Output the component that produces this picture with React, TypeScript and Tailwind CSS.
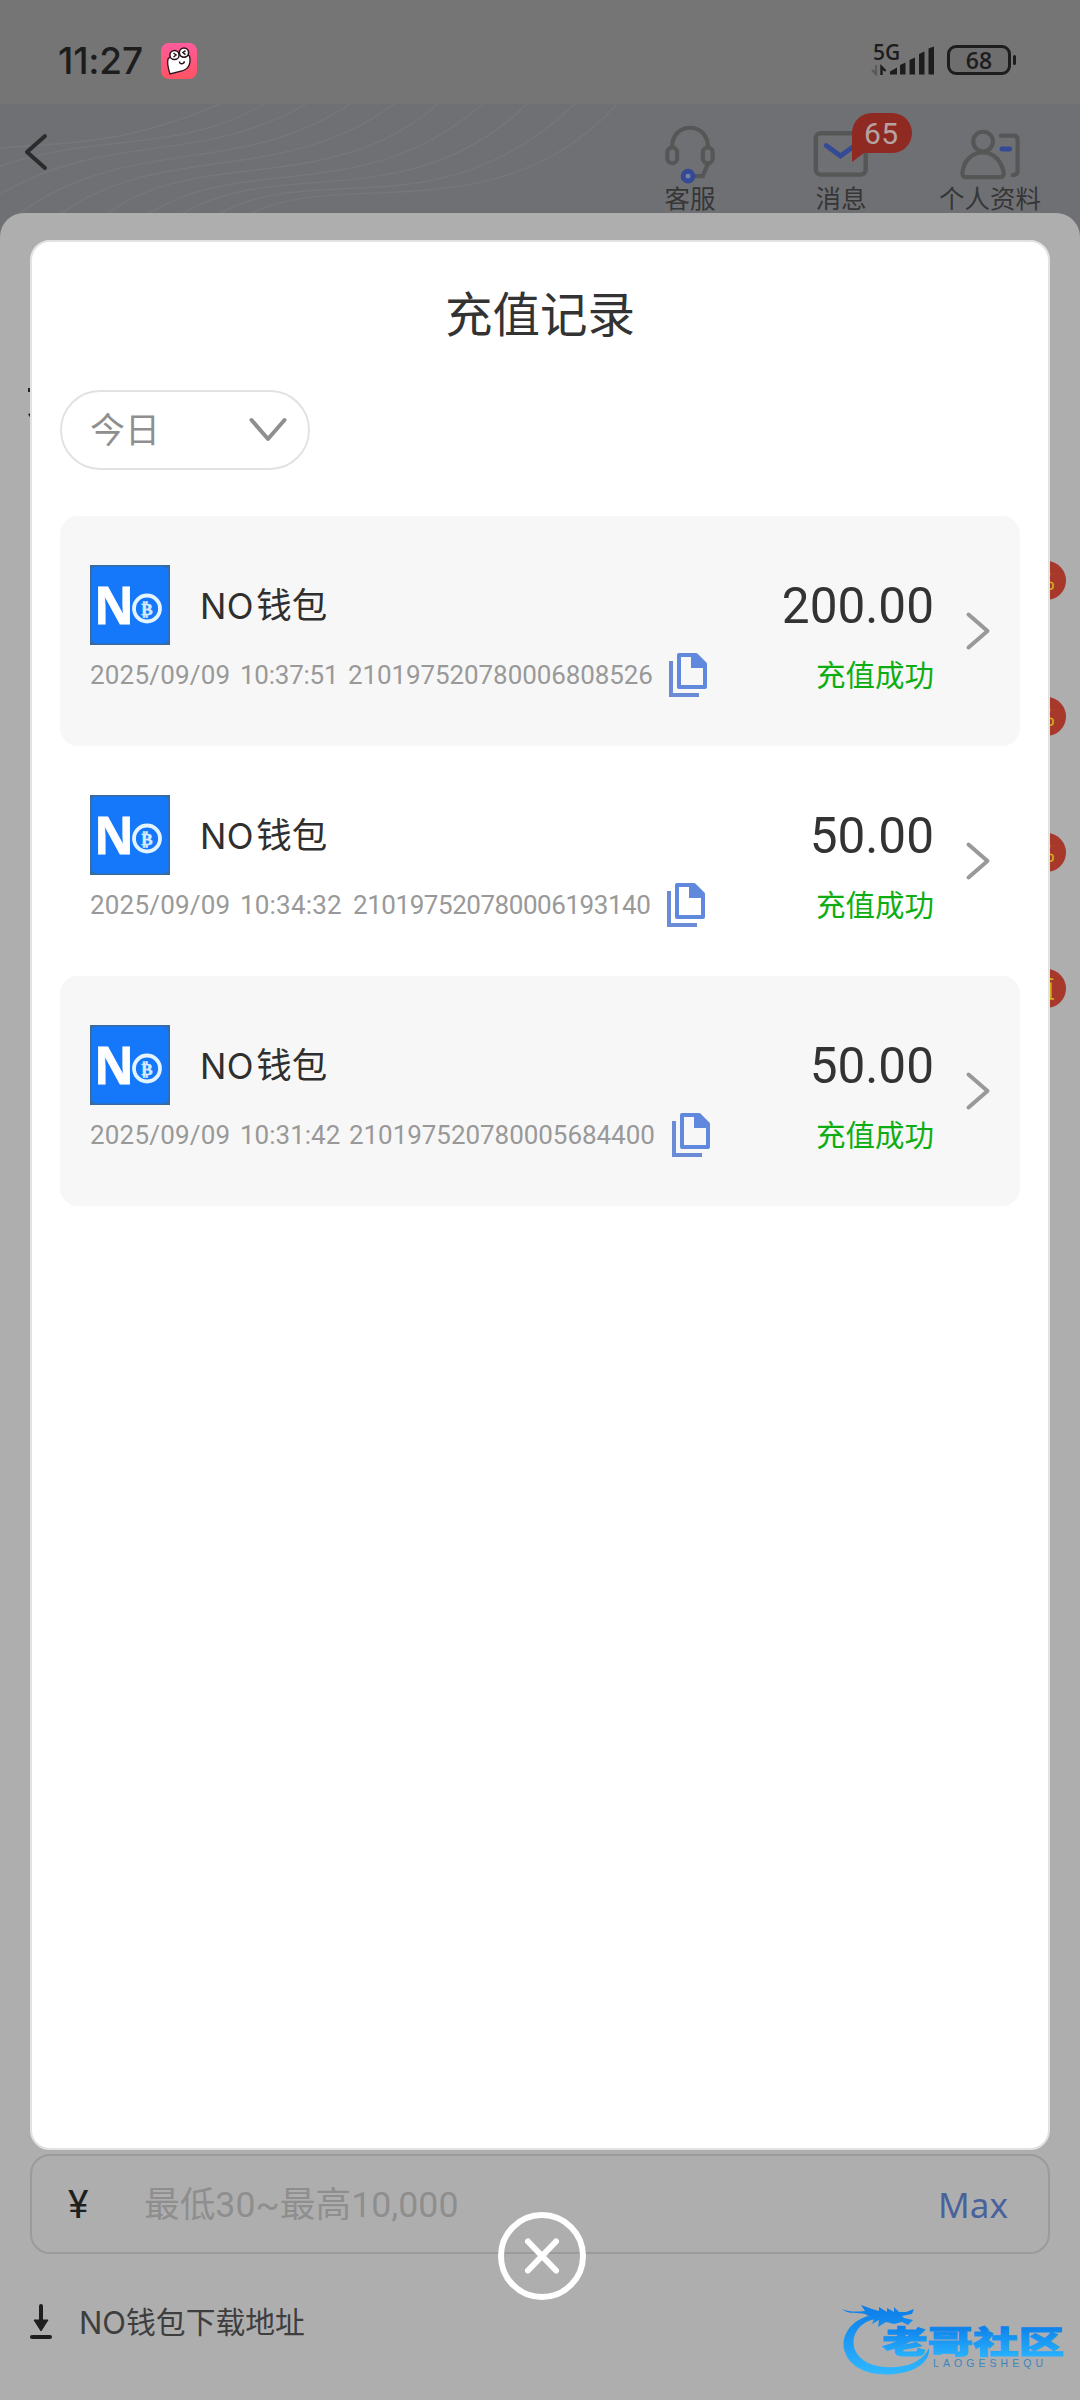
import React from "react";

const cjk = "font-[Roboto,'Noto_Sans_CJK_SC',sans-serif]";

type RecordItem = { amount: string; time: string; id: string; idClass: string; timeClass: string };

const records: RecordItem[] = [
  { amount: "200.00", time: "10:37:51", id: "210197520780006808526", timeClass: "w-[107px] tracking-[-0.25px]", idClass: "w-[321px] tracking-[-0.1px]" },
  { amount: "50.00", time: "10:34:32", id: "210197520780006193140", timeClass: "w-[112px] tracking-[0.2px]", idClass: "w-[314px] tracking-[-0.45px]" },
  { amount: "50.00", time: "10:31:42", id: "210197520780005684400", timeClass: "w-[108px]", idClass: "w-[323px] tracking-[-0.05px]" },
];

function StatusBar() {
  return (
    <div className="flex h-[104px] items-start justify-between bg-[#757575] pl-[58px] pr-[64px]">
      <div className="flex items-center pt-[42px]">
        <span className="w-[103px] whitespace-nowrap font-[Inter] text-[37px] font-medium leading-[38px] tracking-[-0.2px] text-[#1d1d1d]">11:27</span>
        <svg width="36" height="36" viewBox="0 0 36 36">
          <defs>
            <linearGradient id="app" x1="0" y1="0" x2="0" y2="1">
              <stop offset="0" stopColor="#ff5c9c" />
              <stop offset="1" stopColor="#ff5363" />
            </linearGradient>
          </defs>
          <rect width="36" height="36" rx="8" fill="url(#app)" />
          <path d="M7 16C10 12 24 9 28.500 13C30.500 22 27 26 21 28L9 31C7 25 6 20 7 16Z" fill="#fff" stroke="#26101a" strokeWidth="1.3" />
          <circle cx="13.5" cy="12" r="4.6" fill="#fff" stroke="#26101a" strokeWidth="1.5" />
          <circle cx="23" cy="9.6" r="4.6" fill="#fff" stroke="#26101a" strokeWidth="1.5" />
          <path d="M12.5 10l2.6 2l-2.6 2M24.5 7.6l-2.6 2l2.6 2M18.500 18.500q0 2.500 2.500 2.300q2.300-.3 2.300-2.500" fill="none" stroke="#26101a" strokeWidth="1.4" />
        </svg>
      </div>
      <div className="flex items-start pt-[42px]">
        <div className="relative w-[76px]">
          <span className="absolute left-[2px] top-0 font-['Open_Sans'] text-[21px] font-semibold leading-[20px] text-[#1d1d1d]">5G</span>
          <svg width="76" height="34" viewBox="0 0 76 34">
            <path d="M5 23v9l-4-4" fill="none" stroke="#5a5a5a" strokeWidth="2.200" />
            <path d="M10.500 33V25l4 4" fill="none" stroke="#1d1d1d" strokeWidth="2.400" />
            <path d="M19 32.500V29.500l7-4v7zM29 32.500V23l5.500-2.500v12zM38.500 32.500V18l5.500-2.500v17zM48 32.500V12l5.500-2.500v23zM57.500 32.500V6.500l5.500-2v28z" fill="#1d1d1d" />
          </svg>
        </div>
        <div className="mt-[3px] flex h-[30px] w-[64px] items-center justify-center rounded-[9px] border-[3px] border-[#1d1d1d] bg-[#6e6e6e] font-['Open_Sans'] text-[23px] font-semibold leading-none text-[#1d1d1d]">68</div>
        <div className="ml-[2px] mt-[13px] h-[10px] w-[3px] rounded-full bg-[#1d1d1d]" />
      </div>
    </div>
  );
}

function Header() {
  const label = "whitespace-nowrap text-[25.500px] leading-[27px] text-[#363636]";
  return (
    <div className="relative h-[133px] bg-[#6f7074]">
      <svg className="absolute left-0 top-0" width="640" height="109" viewBox="0 0 640 109" fill="none" stroke="#76777a" strokeWidth="1.4">
        <path d="M0 44C70 38 120 42 220 0" />
        <path d="M0 62C100 28 180 50 264 0" />
        <path d="M0 90C110 26 200 62 306 0" />
        <path d="M20 109C130 30 240 74 350 0" />
        <path d="M62 109C160 38 285 82 394 0" />
        <path d="M108 109C200 42 330 94 438 0" />
        <path d="M150 109C240 50 370 102 482 0" />
        <path d="M183 109C280 52 410 114 527 0" />
        <path d="M220 109C320 56 440 128 575 0" />
        <path d="M252 109C340 64 500 130 617 0" />
      </svg>
      <div className="relative flex h-[109px] justify-between pl-[24px] pr-[39px]">
        <svg className="mt-[29px]" width="24" height="38" viewBox="0 0 24 38" fill="none">
          <path d="M21 3L3 19L21 35" stroke="#2b2b2b" strokeWidth="4" strokeLinecap="round" strokeLinejoin="round" />
        </svg>
        <div className="flex pt-[8px]">
          <div className="flex w-[50px] flex-col items-center">
            <svg width="50" height="75" viewBox="0 0 50 75" fill="none" stroke="#555656" strokeWidth="4.200">
              <path d="M7 37C5 9 45 9 43 37" />
              <rect x="2" y="36" width="10" height="16" rx="5" />
              <rect x="38" y="36" width="10" height="16" rx="5" />
              <path d="M43 53L38 65H28" />
              <circle cx="23" cy="65" r="5" stroke="#354a94" strokeWidth="5" fill="#7784a5" />
            </svg>
            <span className={label}>客服</span>
          </div>
          <div className="relative ml-[98px] flex w-[56px] flex-col items-center">
            <svg width="56" height="75" viewBox="0 0 56 75" fill="none">
              <rect x="2.500" y="21.500" width="50.500" height="42" rx="5" stroke="#555656" strokeWidth="4.500" />
              <path d="M13 34L27.500 44.500L42 34" stroke="#354a94" strokeWidth="5" strokeLinecap="round" />
            </svg>
            <span className={label}>消息</span>
            <div className="absolute left-[39px] top-[1px] h-[49px] w-[60px]">
              <svg width="60" height="49" viewBox="0 0 60 49">
                <path d="M20 0H40A20 20 0 0 1 40 40H12L0 49V20A20 20 0 0 1 20 0Z" fill="#8f2a22" />
              </svg>
              <span className="absolute left-[12px] top-[5px] font-[Roboto] text-[30px] leading-[32px] tracking-[0.5px] text-[#b6a3a1]">65</span>
            </div>
          </div>
          <div className="ml-[70px] flex w-[102px] flex-col items-center">
            <svg width="60" height="75" viewBox="0 0 60 75" fill="none" stroke="#555656" strokeWidth="4.200">
              <circle cx="23" cy="30" r="10" />
              <path d="M23 41C10 41 3 51 2 62Q2 66 6 66H40Q44 66 44 62C42 51 35 41 23 41Z" />
              <path d="M41 24H54Q58 24 58 28V59Q58 64 53 64" strokeLinecap="round" />
              <path d="M42 37.500H50" stroke="#354a94" strokeWidth="5" strokeLinecap="round" />
            </svg>
            <span className={label}>个人资料</span>
          </div>
        </div>
      </div>
    </div>
  );
}

function PromoBadge({ text, className }: { text: string; className: string }) {
  return (
    <div className={`absolute right-[14px] flex h-[39px] w-[39px] items-center justify-end overflow-hidden rounded-full bg-[#a7382c] pr-[11px] text-[26px] leading-none text-[#d1ab1e] ${className}`}>
      {text}
    </div>
  );
}

function Sheet() {
  return (
    <div className="relative -mt-[24px] h-[2187px] rounded-t-[24px] bg-[#aeaeae] px-[30px] pt-[1941px]">
      <PromoBadge text="%" className="top-[348px]" />
      <PromoBadge text="%" className="top-[484px]" />
      <PromoBadge text="%" className="top-[620px]" />
      <PromoBadge text="值" className="top-[756px]" />
      <svg className="absolute left-[27px] top-[174px]" width="4" height="32">
        <path d="M1 1h3v4H1zM1 27l3-1v6z" fill="#222" />
      </svg>
      <div className="flex h-[100px] items-center rounded-[20px] border-2 border-[#9b9b9b] pl-[36px] pr-[40px]">
        <span className="w-[76px] pt-[2px] font-[Roboto] text-[39px] leading-none text-[#1f1f1f]">¥</span>
        <span className="grow pt-[3px] text-[35.700px] leading-none text-[#8e8e8e]">最低30~最高10,000</span>
        <span className="font-['Noto_Sans'] text-[35px] leading-none text-[#4a629c]">Max</span>
      </div>
      <div className="mt-[48px] flex h-[38px] items-center">
        <svg width="22" height="38" viewBox="0 0 22 38">
          <path d="M11 4V20" stroke="#1f1f1f" strokeWidth="4" strokeLinecap="round" />
          <path d="M4 18H18L11 29Z" fill="#1f1f1f" stroke="#1f1f1f" strokeLinejoin="round" />
          <path d="M2 35H20" stroke="#1f1f1f" strokeWidth="4" strokeLinecap="round" />
        </svg>
        <span className="ml-[27px] flex items-center pt-[3px] text-[29.800px] leading-none text-[#3e3e3e]">
          <span className="font-[Inter] text-[31px]">NO</span>钱包下载地址
        </span>
      </div>
    </div>
  );
}

function WalletLogo() {
  return (
    <svg width="80" height="80" viewBox="0 0 80 80">
      <rect width="80" height="80" fill="#3a6b9d" />
      <rect x="1.500" y="1.500" width="77" height="77" rx="5" fill="#1578fb" />
      <text x="4" y="59" fontFamily="Open Sans" fontWeight="700" fontSize="52" textLength="40" lengthAdjust="spacingAndGlyphs" fill="#fff" stroke="#fff" strokeWidth="0.800">N</text>
      <circle cx="57" cy="43.500" r="13" fill="none" stroke="#e4f4ff" strokeWidth="3.800" />
      <text x="57" y="49.500" textAnchor="middle" fontFamily="DejaVu Serif" fontWeight="700" fontSize="17" fill="#d3ecff" stroke="#d3ecff" strokeWidth="0.500">₿</text>
    </svg>
  );
}

function RecordRow({ item, shaded }: { item: RecordItem; shaded: boolean }) {
  return (
    <div className={`flex h-[230px] justify-between rounded-[18px] pl-[30px] pr-[29px] ${shaded ? "bg-[#f7f7f7]" : "bg-white"}`}>
      <div className="pt-[49px]">
        <div className="flex h-[80px] items-center">
          <WalletLogo />
          <span className="ml-[30px] flex items-center pt-[3px] text-[35.500px] leading-none text-[#2f2f2f]">
            <span className="mr-[2px] font-[Inter] text-[35px] tracking-[0.5px]">NO</span>钱包
          </span>
        </div>
        <div className="mt-[7px] flex h-[46px] items-center whitespace-nowrap text-[26px] leading-none text-[#999999]">
          <span className="w-[150px] tracking-[0.2px]">2025/09/09</span>
          <span className={item.timeClass}>{item.time}</span>
          <span className={`ml-px ${item.idClass}`}>{item.id}</span>
          <svg width="38" height="44" viewBox="0 0 38 44" fill="none">
            <path d="M2 10V42H28" stroke="#6c8bd6" strokeWidth="4" strokeLinecap="square" />
            <path d="M10 2H27L36 11V34H10Z" stroke="#6088dc" strokeWidth="4" strokeLinejoin="round" />
            <path d="M22 2H27L36 11V15H22Z" fill="#6088dc" />
          </svg>
        </div>
      </div>
      <div className="flex">
        <div className="flex flex-col items-end pt-[67px]">
          <span className="text-[49.500px] leading-[46px] text-[#333333]">{item.amount}</span>
          <span className="mt-[32px] text-[29.500px] leading-[30px] text-[#0eae12]">充值成功</span>
        </div>
        <svg className="ml-[31px] mt-[95px]" width="26" height="40" viewBox="0 0 26 40" fill="none">
          <path d="M3.500 3.500L22.500 20L3.500 36.500" stroke="#999" strokeWidth="4" strokeLinecap="round" strokeLinejoin="round" />
        </svg>
      </div>
    </div>
  );
}

function RecordsModal() {
  return (
    <div className="absolute inset-0 flex flex-col items-center pt-[240px]">
      <div className="h-[1910px] w-[1020px] rounded-[20px] border-2 border-[#e2e2e2] bg-white px-[28px] pt-[49px]">
        <h1 className="text-center text-[47.500px] font-normal leading-[50px] text-[#333333]">充值记录</h1>
        <div className="mt-[49px] flex h-[80px] w-[250px] items-center justify-between rounded-full border-2 border-[#e2e2e2] pl-[28px] pr-[20px]">
          <span className="pt-[3px] text-[35px] leading-none text-[#8f8f8f]">今日</span>
          <svg width="40" height="26" viewBox="0 0 40 26" fill="none">
            <path d="M3.500 3L20 22L36.500 3" stroke="#8f8f8f" strokeWidth="4" strokeLinecap="round" strokeLinejoin="round" />
          </svg>
        </div>
        <div className="mt-[46px]">
          {records.map((item, i) => (
            <RecordRow key={item.id} item={item} shaded={i % 2 === 0} />
          ))}
        </div>
      </div>
      <svg className="ml-[4px] mt-[62px] shrink-0" width="88" height="88" viewBox="0 0 88 88" fill="none" stroke="#fff" strokeWidth="6" strokeLinecap="round">
        <circle cx="44" cy="44" r="41" />
        <path d="M30 29.500L58 58.500M58 29.500L30 58.500" />
      </svg>
    </div>
  );
}

function Watermark() {
  return (
    <svg className="absolute left-[840px] top-[2300px]" width="230" height="80" viewBox="0 0 230 80">
      <defs>
        <linearGradient id="wm" x1="0" y1="5" x2="0" y2="73" gradientUnits="userSpaceOnUse">
          <stop offset="0" stopColor="#0b7be8" />
          <stop offset="1" stopColor="#2eb6ff" />
        </linearGradient>
        <linearGradient id="wmText" x1="0" y1="25" x2="0" y2="56" gradientUnits="userSpaceOnUse">
          <stop offset="0" stopColor="#0b7fe9" />
          <stop offset="1" stopColor="#28b0fd" />
        </linearGradient>
      </defs>
      <path d="M28 16C8 22 0 39 5 52C12 75 48 79 72 70C84 65 90 57 89 48C84 59 72 66 56 67C36 69 20 62 15 50C10 36 19 22 35 19Z" fill="url(#wm)" />
      <path d="M2 9C8 15 18 12 25 14L30 17L22 23L34 19L32 24L39 20L38 27L46 22L54 24L62 22L68 25L73 20L64 18L62 16L72 14L74 9L66 12L59 12L54 7L54 12L47 8L47 12L39 7L39 11L32 9L21 5L25 11C16 12 9 12 2 9Z" fill="url(#wm)" />
      <text x="42" y="53" fontFamily="Noto Sans CJK SC" fontWeight="900" fontSize="31" textLength="182" lengthAdjust="spacingAndGlyphs" fill="url(#wmText)" stroke="url(#wmText)" strokeWidth="1">老哥社区</text>
      <text x="93" y="66.500" fontFamily="Liberation Sans" fontSize="10.500" textLength="110" fill="#3d84bd">LAOGESHEQU</text>
    </svg>
  );
}

export default function App() {
  return (
    <div className={`relative h-[2400px] w-[1080px] overflow-hidden bg-[#aeaeae] ${cjk}`}>
      <StatusBar />
      <Header />
      <Sheet />
      <RecordsModal />
      <Watermark />
    </div>
  );
}
